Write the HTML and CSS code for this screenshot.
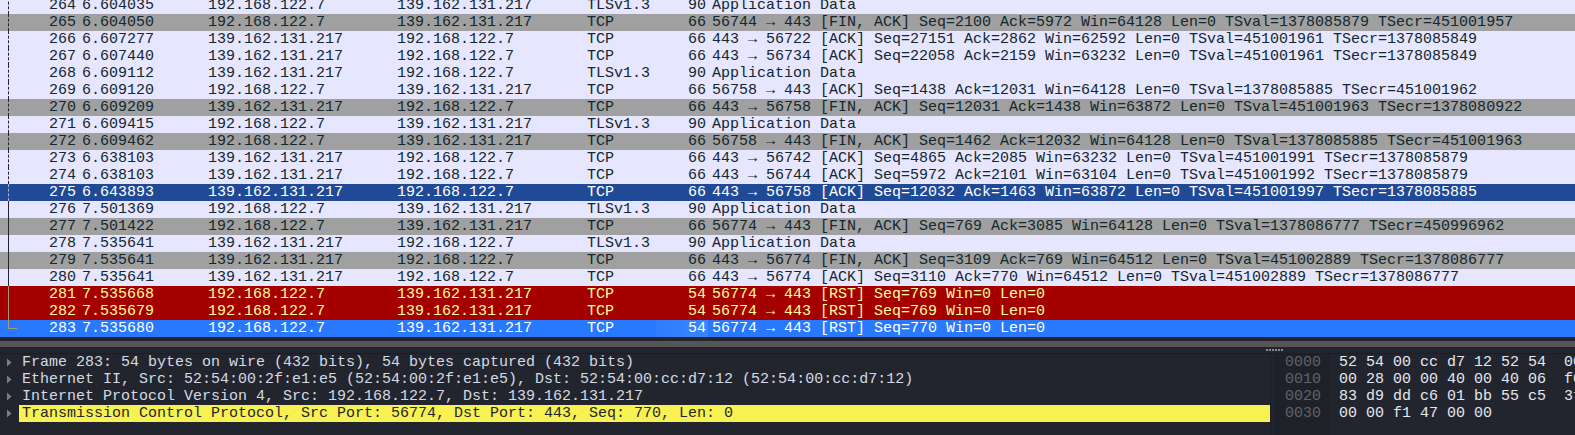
FILE: index.html
```html
<!DOCTYPE html>
<html>
<head>
<meta charset="utf-8">
<title>Wireshark</title>
<link rel="stylesheet" href="styles.css">
</head>
<body>
<main class="window">
  <section class="packets">
    <div class="row tcp"><span class="mark dash"></span><span class="no">264</span><span class="time">6.604035</span><span class="src">192.168.122.7</span><span class="dst">139.162.131.217</span><span class="proto">TLSv1.3</span><span class="len">90</span><span class="info">Application Data</span></div>
    <div class="row fin"><span class="mark dash"></span><span class="no">265</span><span class="time">6.604050</span><span class="src">192.168.122.7</span><span class="dst">139.162.131.217</span><span class="proto">TCP</span><span class="len">66</span><span class="info">56744 → 443 [FIN, ACK] Seq=2100 Ack=5972 Win=64128 Len=0 TSval=1378085879 TSecr=451001957</span></div>
    <div class="row tcp"><span class="mark dash"></span><span class="no">266</span><span class="time">6.607277</span><span class="src">139.162.131.217</span><span class="dst">192.168.122.7</span><span class="proto">TCP</span><span class="len">66</span><span class="info">443 → 56722 [ACK] Seq=27151 Ack=2862 Win=62592 Len=0 TSval=451001961 TSecr=1378085849</span></div>
    <div class="row tcp"><span class="mark dash"></span><span class="no">267</span><span class="time">6.607440</span><span class="src">139.162.131.217</span><span class="dst">192.168.122.7</span><span class="proto">TCP</span><span class="len">66</span><span class="info">443 → 56734 [ACK] Seq=22058 Ack=2159 Win=63232 Len=0 TSval=451001961 TSecr=1378085849</span></div>
    <div class="row tcp"><span class="mark dash"></span><span class="no">268</span><span class="time">6.609112</span><span class="src">139.162.131.217</span><span class="dst">192.168.122.7</span><span class="proto">TLSv1.3</span><span class="len">90</span><span class="info">Application Data</span></div>
    <div class="row tcp"><span class="mark dash"></span><span class="no">269</span><span class="time">6.609120</span><span class="src">192.168.122.7</span><span class="dst">139.162.131.217</span><span class="proto">TCP</span><span class="len">66</span><span class="info">56758 → 443 [ACK] Seq=1438 Ack=12031 Win=64128 Len=0 TSval=1378085885 TSecr=451001962</span></div>
    <div class="row fin"><span class="mark dash"></span><span class="no">270</span><span class="time">6.609209</span><span class="src">139.162.131.217</span><span class="dst">192.168.122.7</span><span class="proto">TCP</span><span class="len">66</span><span class="info">443 → 56758 [FIN, ACK] Seq=12031 Ack=1438 Win=63872 Len=0 TSval=451001963 TSecr=1378080922</span></div>
    <div class="row tcp"><span class="mark dash"></span><span class="no">271</span><span class="time">6.609415</span><span class="src">192.168.122.7</span><span class="dst">139.162.131.217</span><span class="proto">TLSv1.3</span><span class="len">90</span><span class="info">Application Data</span></div>
    <div class="row fin"><span class="mark dash"></span><span class="no">272</span><span class="time">6.609462</span><span class="src">192.168.122.7</span><span class="dst">139.162.131.217</span><span class="proto">TCP</span><span class="len">66</span><span class="info">56758 → 443 [FIN, ACK] Seq=1462 Ack=12032 Win=64128 Len=0 TSval=1378085885 TSecr=451001963</span></div>
    <div class="row tcp"><span class="mark dash"></span><span class="no">273</span><span class="time">6.638103</span><span class="src">139.162.131.217</span><span class="dst">192.168.122.7</span><span class="proto">TCP</span><span class="len">66</span><span class="info">443 → 56742 [ACK] Seq=4865 Ack=2085 Win=63232 Len=0 TSval=451001991 TSecr=1378085879</span></div>
    <div class="row tcp"><span class="mark dash"></span><span class="no">274</span><span class="time">6.638103</span><span class="src">139.162.131.217</span><span class="dst">192.168.122.7</span><span class="proto">TCP</span><span class="len">66</span><span class="info">443 → 56744 [ACK] Seq=5972 Ack=2101 Win=63104 Len=0 TSval=451001992 TSecr=1378085879</span></div>
    <div class="row related"><span class="mark dash"></span><span class="no">275</span><span class="time">6.643893</span><span class="src">139.162.131.217</span><span class="dst">192.168.122.7</span><span class="proto">TCP</span><span class="len">66</span><span class="info">443 → 56758 [ACK] Seq=12032 Ack=1463 Win=63872 Len=0 TSval=451001997 TSecr=1378085885</span></div>
    <div class="row tcp"><span class="mark solid"></span><span class="no">276</span><span class="time">7.501369</span><span class="src">192.168.122.7</span><span class="dst">139.162.131.217</span><span class="proto">TLSv1.3</span><span class="len">90</span><span class="info">Application Data</span></div>
    <div class="row fin"><span class="mark solid"></span><span class="no">277</span><span class="time">7.501422</span><span class="src">192.168.122.7</span><span class="dst">139.162.131.217</span><span class="proto">TCP</span><span class="len">66</span><span class="info">56774 → 443 [FIN, ACK] Seq=769 Ack=3085 Win=64128 Len=0 TSval=1378086777 TSecr=450996962</span></div>
    <div class="row tcp"><span class="mark solid"></span><span class="no">278</span><span class="time">7.535641</span><span class="src">139.162.131.217</span><span class="dst">192.168.122.7</span><span class="proto">TLSv1.3</span><span class="len">90</span><span class="info">Application Data</span></div>
    <div class="row fin"><span class="mark solid"></span><span class="no">279</span><span class="time">7.535641</span><span class="src">139.162.131.217</span><span class="dst">192.168.122.7</span><span class="proto">TCP</span><span class="len">66</span><span class="info">443 → 56774 [FIN, ACK] Seq=3109 Ack=769 Win=64512 Len=0 TSval=451002889 TSecr=1378086777</span></div>
    <div class="row tcp"><span class="mark solid"></span><span class="no">280</span><span class="time">7.535641</span><span class="src">139.162.131.217</span><span class="dst">192.168.122.7</span><span class="proto">TCP</span><span class="len">66</span><span class="info">443 → 56774 [ACK] Seq=3110 Ack=770 Win=64512 Len=0 TSval=451002889 TSecr=1378086777</span></div>
    <div class="row rst"><span class="mark solid"></span><span class="no">281</span><span class="time">7.535668</span><span class="src">192.168.122.7</span><span class="dst">139.162.131.217</span><span class="proto">TCP</span><span class="len">54</span><span class="info">56774 → 443 [RST] Seq=769 Win=0 Len=0</span></div>
    <div class="row rst"><span class="mark solid"></span><span class="no">282</span><span class="time">7.535679</span><span class="src">192.168.122.7</span><span class="dst">139.162.131.217</span><span class="proto">TCP</span><span class="len">54</span><span class="info">56774 → 443 [RST] Seq=769 Win=0 Len=0</span></div>
    <div class="row selected"><span class="mark end"></span><span class="no">283</span><span class="time">7.535680</span><span class="src">192.168.122.7</span><span class="dst">139.162.131.217</span><span class="proto">TCP</span><span class="len">54</span><span class="info">56774 → 443 [RST] Seq=770 Win=0 Len=0</span></div>
  </section>

  <div class="hscroll"><div class="hscroll-thumb"></div></div>
  <div class="splitter"><span class="grip"></span></div>

  <section class="bottom">
    <div class="details">
      <div class="tree"><svg class="caret" width="6" height="9" viewBox="0 0 6 9"><path d="M1 0.5 L5.5 4.5 L1 8.5 Z"/></svg><span class="tree-text">Frame 283: 54 bytes on wire (432 bits), 54 bytes captured (432 bits)</span></div>
      <div class="tree"><svg class="caret" width="6" height="9" viewBox="0 0 6 9"><path d="M1 0.5 L5.5 4.5 L1 8.5 Z"/></svg><span class="tree-text">Ethernet II, Src: 52:54:00:2f:e1:e5 (52:54:00:2f:e1:e5), Dst: 52:54:00:cc:d7:12 (52:54:00:cc:d7:12)</span></div>
      <div class="tree"><svg class="caret" width="6" height="9" viewBox="0 0 6 9"><path d="M1 0.5 L5.5 4.5 L1 8.5 Z"/></svg><span class="tree-text">Internet Protocol Version 4, Src: 192.168.122.7, Dst: 139.162.131.217</span></div>
      <div class="tree"><svg class="caret" width="6" height="9" viewBox="0 0 6 9"><path d="M1 0.5 L5.5 4.5 L1 8.5 Z"/></svg><span class="tree-text highlight">Transmission Control Protocol, Src Port: 56774, Dst Port: 443, Seq: 770, Len: 0</span></div>
    </div>
    <div class="hex">
      <div class="offsets"><div>0000</div><div>0010</div><div>0020</div><div>0030</div></div>
      <div class="bytes"><div>52 54 00 cc d7 12 52 54  00 2f e1 e5 08 00 45 00</div><div>00 28 00 00 40 00 40 06  f0 3a c0 a8 7a 07 8b a2</div><div>83 d9 dd c6 01 bb 55 c5  3f 2a 00 00 00 00 50 04</div><div>00 00 f1 47 00 00</div></div>
    </div>
  </section>
</main>
</body>
</html>
```

FILE: styles.css
```css
* { box-sizing: border-box; }
html, body { margin: 0; padding: 0; }
body {
  width: 1575px;
  height: 435px;
  overflow: hidden;
  background: #23252e;
  font-family: "Liberation Mono", monospace;
  font-size: 15px;
  line-height: 17px;
}
.window { display: flex; flex-direction: column; height: 435px; overflow: hidden; }

.packets { height: 337px; overflow: hidden; display: flex; flex-direction: column; justify-content: flex-end; flex: none; }
.row { display: flex; flex: none; height: 17px; white-space: pre; }
.row span { display: block; flex: none; }
.tcp { background: #e7e6ff; color: #12272e; }
.fin { background: #a0a0a0; color: #12272e; }
.related { background: #214a96; color: #ffffff; }
.rst { background: #a40000; color: #fffc9c; }
.selected { background: #2979ff; color: #ffffff; }

.mark { width: 9px; margin-left: 8px; height: 17px; border-left: 1px solid #23252e; }
.mark.dash { border-left: 1px dashed #23252e; }
.related .mark.dash { border-left-color: #a9b4cc; }
.rst .mark.solid { border-left-color: #a3987a; }
.mark.end { height: 9px; border-left: 1px solid #a3987a; border-bottom: 1px solid #a3987a; }

.no { width: 59px; text-align: right; }
.time { width: 126px; margin-left: 6px; }
.src { width: 189px; }
.dst { width: 190px; }
.proto { width: 69px; }
.len { width: 52px; padding-right: 2px; text-align: right; }
.selected .len { background: linear-gradient(90deg, #2f7dff, #3a85ff); }
.info { margin-left: 4px; }

.hscroll { height: 16px; padding: 4px 0 6px; flex: none; background: #23252e; }
.hscroll-thumb { height: 6px; background: #555659; }
.splitter { height: 0; flex: none; display: flex; justify-content: flex-end; padding-right: 292px; }
.grip {
  width: 17px;
  height: 2px;
  margin-top: -4px;
  background: repeating-linear-gradient(90deg, #8a8b90 0 2px, transparent 2px 3px);
}

.bottom { display: flex; flex: 1; min-height: 0; border-top: 1px solid #1b1d24; }
.details { width: 1271px; flex: none; padding: 0 0 0 6px; color: #d3dae3; border-right: 1px solid #1b1d24; }
.tree { display: flex; align-items: center; height: 17px; white-space: pre; }
.caret { flex: none; fill: #7d8088; margin-right: 7px; }
.tree-text { flex: 1; padding-left: 3px; }
.highlight { background: #f7f252; color: #23252e; }

.hex { display: flex; flex: 1; min-width: 0; margin-left: 4px; overflow: hidden; white-space: pre; }
.offsets { width: 55px; flex: none; padding-left: 9px; color: #5f636b; background: #1f2128; border-left: 1px solid #1b1d24; }
.bytes { padding-left: 9px; color: #e4e8ee; }
```
